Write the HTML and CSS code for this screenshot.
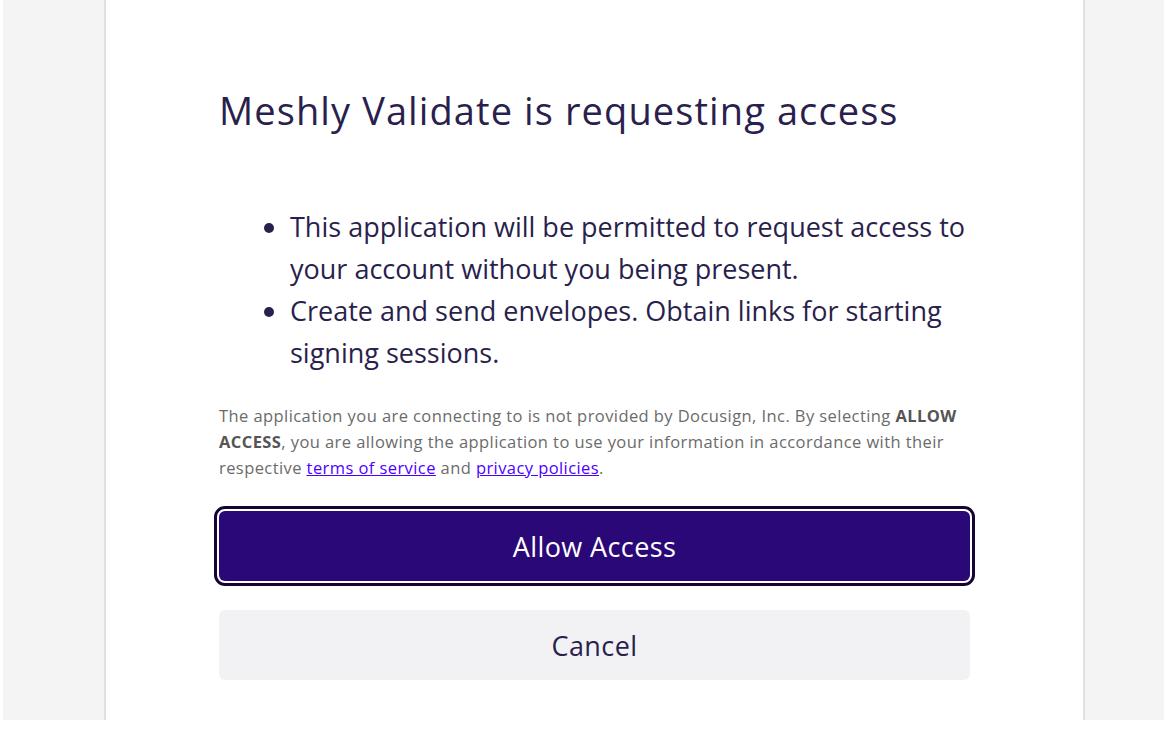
FILE: index.html
```html
<!DOCTYPE html>
<html lang="en">
<head>
    <meta charset="UTF-8">
    <meta name="viewport" content="width=device-width, initial-scale=1.0">
    <title>Meshly Validate is requesting access</title>
    <link rel="stylesheet" href="styles.css">
</head>
<body>
    <div class="page">
        <div class="consent-card">
            <h1 class="consent-title">Meshly Validate is requesting access</h1>

            <ul class="scope-list">
                <li>This application will be permitted to request access to your account without you being present.</li>
                <li>Create and send envelopes. Obtain links for starting signing sessions.</li>
            </ul>

            <p class="disclaimer">
                The application you are connecting to is not provided by Docusign, Inc. By selecting <strong>ALLOW ACCESS</strong>, you are allowing the application to use your information in accordance with their respective <a href="#">terms of service</a> and <a href="#">privacy policies</a>.
            </p>

            <div class="actions">
                <button class="btn btn-primary" type="button">Allow Access</button>
                <button class="btn btn-secondary" type="button">Cancel</button>
            </div>
        </div>
    </div>
</body>
</html>
```

FILE: styles.css
```css
html, body {
    margin: 0;
    padding: 0;
    background: #fff;
}

body {
    font-family: "Open Sans", "Noto Sans", sans-serif;
    color: #2a1f4d;
    padding: 0 0 10px 3px;
}

.page {
    background-color: #f4f4f4;
    height: 720px;
    padding-left: 101px;
    overflow: hidden;
}

.consent-card {
    width: 981px;
    height: 720px;
    background: #fff;
    border-left: 2px solid #e0e0e0;
    border-right: 2px solid #e0e0e0;
    padding: 0 113px 0 113px;
    box-sizing: border-box;
}

.consent-title {
    margin: 0;
    padding-top: 85px;
    font-size: 38px;
    font-weight: 400;
    line-height: 50px;
    letter-spacing: 1.1px;
    color: #2a1f4d;
}

.scope-list {
    margin: 71px 0 0;
    padding-left: 71px;
    font-size: 27px;
    line-height: 42px;
}

.disclaimer {
    margin: 29px 0 0;
    font-size: 16.5px;
    line-height: 26px;
    letter-spacing: 0.42px;
    color: #6b6b6b;
}

.disclaimer strong {
    color: #555;
}

.disclaimer a {
    color: #4c00ff;
}

.actions {
    display: flex;
    flex-direction: column;
    gap: 29px;
    margin-top: 30px;
}

.btn {
    height: 70px;
    border: none;
    border-radius: 6px;
    font-family: inherit;
    font-size: 27px;
    letter-spacing: 0.4px;
    cursor: pointer;
}

.btn-primary {
    background: #2b0878;
    color: #fff;
    outline: 3px solid #150532;
    outline-offset: 2px;
}

.btn-secondary {
    background: #f2f2f4;
    color: #2a1f4d;
}
```
